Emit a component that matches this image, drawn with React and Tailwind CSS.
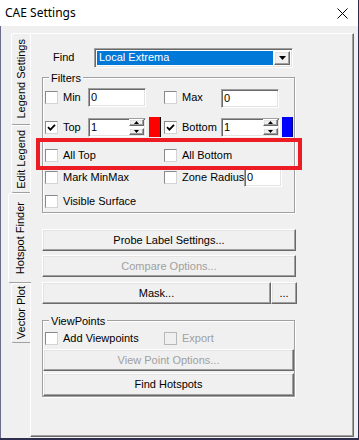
import React from "react";

// classic win32 bevels
const raised =
  "bg-[#f0f0f0] border border-t-white border-l-white border-b-[#696969] border-r-[#696969] shadow-[inset_-1px_-1px_0_#a0a0a0,inset_1px_1px_0_#e3e3e3]";
const sunken =
  "bg-white border border-t-[#a0a0a0] border-l-[#a0a0a0] border-b-white border-r-white shadow-[inset_1px_1px_0_#696969,inset_-1px_-1px_0_#e3e3e3]";
const etched =
  "border border-[#a0a0a0] shadow-[1px_1px_0_#fff,inset_1px_1px_0_#fff]";

const CheckBox = ({ checked, disabled }) => (
  <span
    className={`w-[13px] h-[13px] shrink-0 flex items-center justify-center ${
      disabled
        ? "bg-[#f0f0f0] border border-[#b8b8b8]"
        : "bg-white border border-t-[#8a8a8a] border-l-[#8a8a8a] border-b-[#d4d4d4] border-r-[#d4d4d4]"
    }`}
  >
    {checked && (
      <svg width="9" height="9" viewBox="0 0 9 9">
        <path d="M1 4.2 L3.4 6.6 L8 1.8" stroke="#000" strokeWidth="1.8" fill="none" />
      </svg>
    )}
  </span>
);

const Check = ({ checked, disabled, label, w = "" }) => (
  <div className="flex items-center gap-[5px] h-full">
    <CheckBox checked={checked} disabled={disabled} />
    <span className={`${w} whitespace-nowrap ${disabled ? "text-[#a0a0a0]" : "text-black"}`}>{label}</span>
  </div>
);

const Tri = ({ up }) => (
  <svg width="5" height="3" viewBox="0 0 5 3">
    <path d={up ? "M2.5 0 L5 3 L0 3 Z" : "M0 0 L5 0 L2.5 3 Z"} fill="#000" />
  </svg>
);

const Edit = ({ value, w, spin, mt = "" }) => (
  <div className={`${w} ${mt} h-[19px] flex items-center ${sunken}`}>
    <span className="flex-1 pl-[2px] leading-none">{value}</span>
    {spin && (
      <div className="flex flex-col gap-[2px] mr-[1px]">
        <div className={`w-[15px] h-[7px] flex items-center justify-center ${raised}`}>
          <Tri up />
        </div>
        <div className={`w-[15px] h-[7px] flex items-center justify-center ${raised}`}>
          <Tri />
        </div>
      </div>
    )}
  </div>
);

const Button = ({ children, w = "w-full", h = "h-[22px]", mt = "", disabled }) => (
  <div
    className={`${w} ${h} ${mt} flex items-center justify-center ${raised} ${
      disabled ? "text-[#a0a0a0]" : "text-black"
    }`}
  >
    {children}
  </div>
);

const Tab = ({ label, h, selected }) => (
  <div
    className={`${h} flex items-center justify-center rounded-l-[3px] border-l border-t border-b border-l-white border-t-white border-b-[#a0a0a0] ${
      selected ? "w-[23px] -ml-px relative z-10 bg-[#f0f0f0]" : "w-[19px] ml-[2px] bg-[#f0f0f0]"
    }`}
  >
    <span className="[writing-mode:vertical-rl] rotate-180 whitespace-nowrap">{label}</span>
  </div>
);

const App = () => {
  return (
    <div className="w-[359px] h-[440px] bg-[#2e2e4e] font-['Liberation_Sans',Arial,sans-serif] text-[11px] text-black">
      <div className="w-[358px] h-[438px] flex flex-col bg-[#f0f0f0]">
        {/* title bar */}
        <div className="h-[26px] bg-white flex items-center justify-between pl-[5px] pr-[10px] shrink-0">
          <span className="font-['Noto_Sans',sans-serif] text-[12px] text-black">CAE Settings</span>
          <svg width="11" height="11" viewBox="0 0 11 11">
            <path d="M0.5 0.5 L10.5 10.5 M10.5 0.5 L0.5 10.5" stroke="#000" strokeWidth="1" />
          </svg>
        </div>

        <div className="flex-1 flex pt-[7px] pl-[8px] border-l border-[#6b6b8a]">
          {/* vertical tabs */}
          <div className="w-[21px] flex flex-col">
            <Tab label="Legend Settings" h="h-[92px]" />
            <Tab label="Edit Legend" h="h-[68px]" />
            <Tab label="Hotspot Finder" h="h-[90px]" selected />
            <Tab label="Vector Plot" h="h-[60px]" />
          </div>

          {/* tab page */}
          <div className="relative w-[324px] h-[404px] border border-t-white border-l-white border-b-[#696969] border-r-[#696969] shadow-[inset_-1px_-1px_0_#a0a0a0] pl-[11px] pt-[14px]">
            {/* find */}
            <div className="flex items-center h-[19px]">
              <span className="ml-[11px] w-[41px]">Find</span>
              <div className={`w-[199px] h-[20px] flex items-stretch p-[2px] ${sunken}`}>
                <div className="flex-1 bg-[#0078d7] text-white flex items-center pl-[2px] mr-px">Local Extrema</div>
                <div className={`w-[16px] flex items-center justify-center ${raised}`}>
                  <svg width="7" height="4" viewBox="0 0 7 4">
                    <path d="M0 0 L7 0 L3.5 4 Z" fill="#000" />
                  </svg>
                </div>
              </div>
            </div>

            {/* filters */}
            <div className={`relative mt-[10px] w-[253px] h-[136px] pt-[9px] pl-[2px] ${etched}`}>
              <span className="absolute -top-[8px] left-[6px] px-[2px] bg-[#f0f0f0]">Filters</span>

              <div className="flex h-[20px]">
                <div className="w-[119px] flex items-center">
                  <Check label="Min" w="w-[25px]" />
                  <Edit value="0" w="w-[58px]" />
                </div>
                <div className="flex items-center">
                  <Check label="Max" w="w-[39px]" />
                  <Edit value="0" w="w-[58px]" mt="mt-[3px]" />
                </div>
              </div>

              <div className="flex h-[20px] mt-[10px]">
                <div className="w-[119px] flex items-center">
                  <Check checked label="Top" w="w-[25px]" />
                  <Edit value="1" w="w-[58px]" spin />
                  <div className="ml-[3px] w-[12px] h-[20px] bg-[#ff0000] border-r border-black" />
                </div>
                <div className="flex items-center">
                  <Check checked label="Bottom" w="w-[39px]" />
                  <Edit value="1" w="w-[59px]" spin />
                  <div className="ml-[2px] w-[11px] h-[20px] bg-[#0000ff] border-r border-[#000080]" />
                </div>
              </div>

              <div className="flex h-[20px] mt-[8px]">
                <div className="w-[119px]">
                  <Check label="All Top" />
                </div>
                <Check label="All Bottom" />
              </div>

              <div className="flex h-[20px] mt-[2px]">
                <div className="w-[119px]">
                  <Check label="Mark MinMax" />
                </div>
                <div className="flex items-center">
                  <Check label="Zone Radius" w="w-[62px]" />
                  <Edit value="0" w="w-[38px]" />
                </div>
              </div>

              <div className="flex h-[20px] mt-[4px]">
                <Check label="Visible Surface" />
              </div>
            </div>

            {/* buttons */}
            <Button w="w-[254px]" mt="mt-[16px]">Probe Label Settings...</Button>
            <Button w="w-[254px]" mt="mt-[4px]" disabled>Compare Options...</Button>
            <div className="flex mt-[5px] w-[255px]">
              <Button w="w-[229px]">Mask...</Button>
              <Button w="w-[26px]">...</Button>
            </div>

            {/* viewpoints */}
            <div className={`relative mt-[16px] w-[253px] h-[77px] pt-[7px] ${etched}`}>
              <span className="absolute -top-[8px] left-[6px] px-[2px] bg-[#f0f0f0]">ViewPoints</span>
              <div className="flex h-[20px] pl-[2px]">
                <div className="w-[119px]">
                  <Check label="Add Viewpoints" />
                </div>
                <Check label="Export" disabled />
              </div>
              <Button mt="mt-[1px]" disabled>View Point Options...</Button>
              <Button mt="mt-[2px]" h="h-[23px]">Find Hotspots</Button>
            </div>

            {/* red highlight annotation */}
            <div className="absolute left-[5px] top-[104px] w-[266px] h-[32px] border-[4px] border-[#ed1c24]" />
          </div>
        </div>
      </div>
    </div>
  );
};

export default App;
